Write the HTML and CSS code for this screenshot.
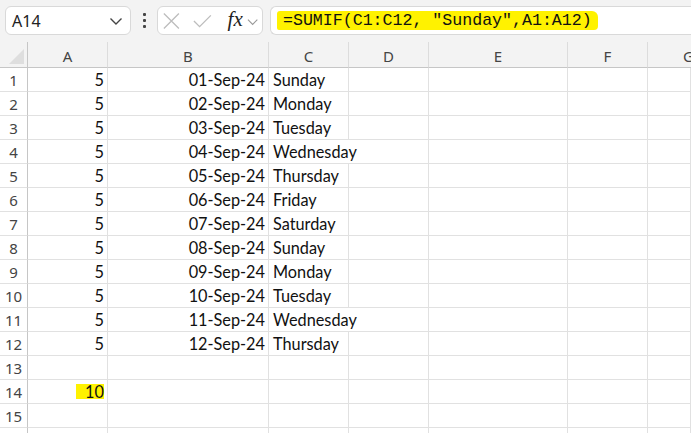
FILE: index.html
```html
<!DOCTYPE html>
<html>
<head>
<meta charset="utf-8">
<link rel="stylesheet" href="styles.css">
</head>
<body>
<div class="toolbar">
  <div class="namebox">
    <span class="name">A14</span>
    <svg class="chev" width="14" height="9" viewBox="0 0 14 9"><path d="M1.5 1.5 L7 7 L12.5 1.5" fill="none" stroke="#444" stroke-width="1.4"/></svg>
  </div>
  <div class="dots"><i></i><i></i><i></i></div>
  <div class="fxbox">
    <svg width="20" height="20" viewBox="0 0 20 20"><path d="M2 2 L18 18 M18 2 L2 18" stroke="#bdbdbd" stroke-width="1.4" fill="none"/></svg>
    <svg width="20" height="20" viewBox="0 0 20 20"><path d="M1 10 L7 16 L19 4" stroke="#bdbdbd" stroke-width="1.4" fill="none"/></svg>
    <span class="fx">fx</span>
    <svg class="chev2" width="12" height="8" viewBox="0 0 12 8"><path d="M1 1.5 L6 6.5 L11 1.5" fill="none" stroke="#999" stroke-width="1.2"/></svg>
  </div>
  <div class="formula"><span class="hl">=SUMIF(C1:C12, "Sunday",A1:A12)</span></div>
</div>
<div class="sheet">
  <div class="hdr corner"><span class="tri"></span></div>
  <div class="hdr">A</div><div class="hdr">B</div><div class="hdr">C</div><div class="hdr">D</div><div class="hdr">E</div><div class="hdr">F</div><div class="hdr last">G</div>

  <div class="rh">1</div><div class="c num">5</div><div class="c num">01-Sep-24</div><div class="c txt">Sunday</div><div class="c"></div><div class="c"></div><div class="c"></div><div class="c"></div>
  <div class="rh">2</div><div class="c num">5</div><div class="c num">02-Sep-24</div><div class="c txt">Monday</div><div class="c"></div><div class="c"></div><div class="c"></div><div class="c"></div>
  <div class="rh">3</div><div class="c num">5</div><div class="c num">03-Sep-24</div><div class="c txt">Tuesday</div><div class="c"></div><div class="c"></div><div class="c"></div><div class="c"></div>
  <div class="rh">4</div><div class="c num">5</div><div class="c num">04-Sep-24</div><div class="c txt over">Wednesday</div><div class="c"></div><div class="c"></div><div class="c"></div><div class="c"></div>
  <div class="rh">5</div><div class="c num">5</div><div class="c num">05-Sep-24</div><div class="c txt">Thursday</div><div class="c"></div><div class="c"></div><div class="c"></div><div class="c"></div>
  <div class="rh">6</div><div class="c num">5</div><div class="c num">06-Sep-24</div><div class="c txt">Friday</div><div class="c"></div><div class="c"></div><div class="c"></div><div class="c"></div>
  <div class="rh">7</div><div class="c num">5</div><div class="c num">07-Sep-24</div><div class="c txt">Saturday</div><div class="c"></div><div class="c"></div><div class="c"></div><div class="c"></div>
  <div class="rh">8</div><div class="c num">5</div><div class="c num">08-Sep-24</div><div class="c txt">Sunday</div><div class="c"></div><div class="c"></div><div class="c"></div><div class="c"></div>
  <div class="rh">9</div><div class="c num">5</div><div class="c num">09-Sep-24</div><div class="c txt">Monday</div><div class="c"></div><div class="c"></div><div class="c"></div><div class="c"></div>
  <div class="rh">10</div><div class="c num">5</div><div class="c num">10-Sep-24</div><div class="c txt">Tuesday</div><div class="c"></div><div class="c"></div><div class="c"></div><div class="c"></div>
  <div class="rh">11</div><div class="c num">5</div><div class="c num">11-Sep-24</div><div class="c txt over">Wednesday</div><div class="c"></div><div class="c"></div><div class="c"></div><div class="c"></div>
  <div class="rh">12</div><div class="c num">5</div><div class="c num">12-Sep-24</div><div class="c txt">Thursday</div><div class="c"></div><div class="c"></div><div class="c"></div><div class="c"></div>
  <div class="rh">13</div><div class="c"></div><div class="c"></div><div class="c"></div><div class="c"></div><div class="c"></div><div class="c"></div><div class="c"></div>
  <div class="rh">14</div><div class="c num"><span class="mark">10</span></div><div class="c"></div><div class="c"></div><div class="c"></div><div class="c"></div><div class="c"></div><div class="c"></div>
  <div class="rh">15</div><div class="c"></div><div class="c"></div><div class="c"></div><div class="c"></div><div class="c"></div><div class="c"></div><div class="c"></div>
  <div class="rh"></div><div class="c"></div><div class="c"></div><div class="c"></div><div class="c"></div><div class="c"></div><div class="c"></div><div class="c"></div>
</div>
</body>
</html>
```

FILE: styles.css
```css
html, body {
  margin: 0;
  padding: 0;
  background: #f3f3f3;
  overflow: hidden;
  width: 691px;
  height: 433px;
}
.toolbar {
  height: 42px;
  display: flex;
  align-items: flex-start;
  padding: 6px 0 0 5px;
  box-sizing: border-box;
  font-family: "Noto Sans", "Open Sans", sans-serif;
}
.namebox {
  width: 126px;
  height: 29px;
  box-sizing: border-box;
  background: #fff;
  border: 1px solid #d9d9d9;
  border-radius: 6px;
  display: flex;
  align-items: center;
  justify-content: space-between;
  padding: 0 7px 0 6px;
}
.name {
  font-size: 16px;
  color: #222;
}
.chev { margin-top: 1px; }
.dots {
  width: 26px;
  height: 29px;
  display: flex;
  flex-direction: column;
  align-items: center;
  justify-content: center;
  gap: 3px;
}
.dots i {
  display: block;
  width: 3px;
  height: 3px;
  background: #444;
  border-radius: 1px;
}
.fxbox {
  width: 106px;
  height: 29px;
  box-sizing: border-box;
  background: #fff;
  border: 1px solid #d9d9d9;
  border-radius: 6px;
  display: flex;
  align-items: center;
  padding: 0 4px 0 4px;
  gap: 12px;
}
.fx {
  font-family: "Liberation Serif", serif;
  font-style: italic;
  font-size: 21px;
  color: #222;
  margin-left: 4px;
  line-height: 1;
  margin-top: -3px;
}
.chev2 { margin-left: -8px; margin-top: 2px; }
.formula {
  margin-left: 7px;
  flex: 1;
  height: 29px;
  box-sizing: border-box;
  background: #fff;
  border: 1px solid #d9d9d9;
  border-right: none;
  border-radius: 6px 0 0 6px;
  display: flex;
  align-items: center;
  padding-left: 6px;
}
.hl {
  font-family: "Liberation Mono", "DejaVu Sans Mono", monospace;
  font-size: 16.6px;
  color: #111;
  background: #fff200;
  padding: 0 6px 0 6px;
  line-height: 19px;
  border-radius: 3px 6px 4px 2px;
  white-space: pre;
}
.sheet {
  display: grid;
  grid-template-columns: 28px 80px 161px 80px 80px 139px 80px 1fr;
  grid-template-rows: 26px repeat(16, 24px);
  background: #fff;
}
.hdr {
  background: #f3f3f3;
  border-right: 1px solid #dcdcdc;
  border-bottom: 1px solid #c6c6c6;
  box-sizing: border-box;
  font-family: "Noto Sans", "Open Sans", sans-serif;
  font-size: 15px;
  color: #444;
  display: flex;
  align-items: center;
  justify-content: center;
  padding-top: 2px;
}
.hdr.last {
  border-right: none;
  justify-content: flex-start;
  padding-left: 35px;
  overflow: hidden;
}
.corner { position: relative; border-right: 1px solid #c6c6c6; }
.tri {
  position: absolute;
  right: 3px;
  bottom: 3px;
  width: 0;
  height: 0;
  border-left: 15px solid transparent;
  border-bottom: 15px solid #dedede;
}
.rh {
  background: #fff;
  border-right: 1px solid #c6c6c6;
  border-bottom: 1px solid #e1e1e1;
  box-sizing: border-box;
  font-family: "Noto Sans", "Open Sans", sans-serif;
  font-size: 15px;
  color: #444;
  display: flex;
  align-items: center;
  justify-content: center;
  padding-top: 1px;
}
.c {
  border-right: 1px solid #e1e1e1;
  border-bottom: 1px solid #e1e1e1;
  box-sizing: border-box;
  font-family: "Lato", sans-serif;
  font-size: 16.3px;
  color: #111;
  display: flex;
  align-items: center;
  white-space: nowrap;
  padding-bottom: 1px;
}
.num { justify-content: flex-end; padding-right: 3px; }
.txt { padding-left: 4px; }
.over { border-right: none; overflow: visible; }
.mark {
  background: #fff200;
  padding-left: 9px;
  line-height: 15px;
}
```
